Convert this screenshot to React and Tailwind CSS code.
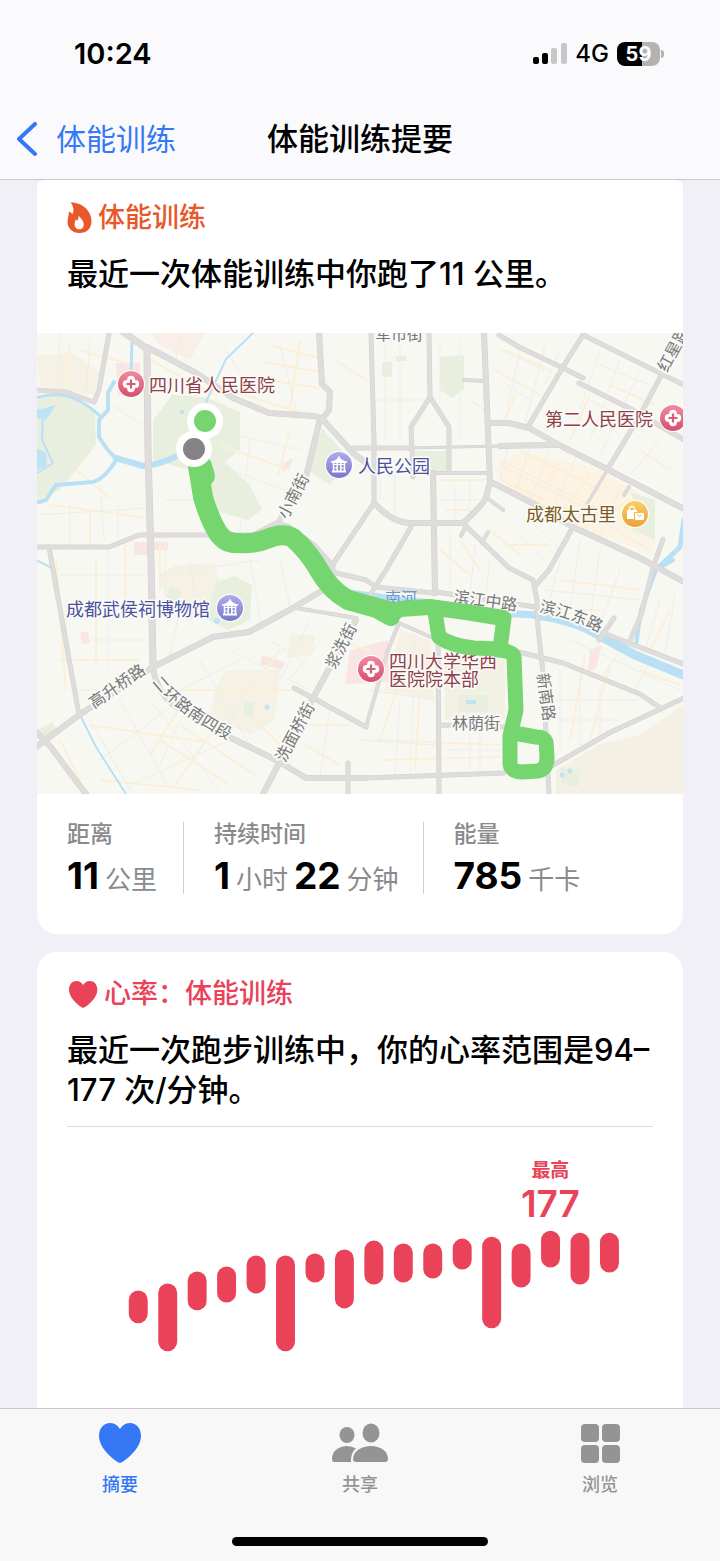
const FONT = "font-['Inter','Noto_Sans_CJK_SC',sans-serif]";

const ROADS = [
  [7, "M122 331 L147 349 L148 450 L151 560 L153 667"],
  [6, "M147 347 L196 373 L233 398 L269 413 L314 416 Q321 417 326 423 L353 453 L366 463"],
  [6, "M319 333 L322 384 L330 392 L329 410 L319 423 L306 477 L280 520"],
  [5, "M36 390 L66 392 L94 402 L99 390 L109 333"],
  [5, "M36 547 L109 547 L139 535 L253 535 L276 523 L289 527 L314 545 L333 566"],
  [5, "M333 564 L374 503 L374 443 L371 333"],
  [6, "M374 503 Q392 522 409 523 L463 523 Q484 504 486 497 L490 482 L484 333"],
  [6, "M491 482 L536 505 L573 527 L640 558 L686 583"],
  [5, "M352 448 L409 448"],
  [3, "M409 448 L500 446"],
  [6, "M500 446 L556 445"],
  [6, "M491 423 L509 423 L529 428 L563 447 L603 467 L686 510"],
  [5, "M499 335 L519 347 L563 368 L583 378"],
  [5, "M579 383 L629 408 L686 441"],
  [5, "M586 330 L563 367 L529 425"],
  [5, "M583 335 L686 386"],
  [5, "M663 372 L639 417 L609 467"],
  [3, "M609 467 L587 504"],
  [5, "M429 333 L430 397 L411 427 L413 477"],
  [5, "M430 397 L449 427 L449 472"],
  [4, "M433 473 L489 473"],
  [6, "M433 473 L435 593"],
  [5, "M411 527 L386 570 L368 598"],
  [5, "M463 523 L509 568 L533 580 L537 600 L538 627 L543 673 L549 794"],
  [5, "M573 527 L549 570 L536 585"],
  [4, "M486 497 L503 510"],
  [4, "M464 380 L484 381"],
  [4, "M466 526 L461 536"],
  [4, "M488 532 L482 543"],
  [4, "M629 487 L624 495"],
  [5, "M663 539 L653 568 L641 615 L629 643"],
  [5, "M436 592 L456 595 L536 607"],
  [5, "M599 640 L614 618"],
  [5, "M603 633 L629 643 L686 665"],
  [5, "M519 652 L563 663 L640 694 L659 707"],
  [5, "M550 767 L609 733 L686 697"],
  [5, "M366 778 L503 773"],
  [5, "M438 640 L439 794"],
  [5, "M441 725 L506 727"],
  [4, "M399 623 L433 638"],
  [4, "M399 623 L388 650 L366 727"],
  [5, "M294 688 L313 698 L366 727"],
  [6, "M153 667 L213 637 L249 632 L293 608 L323 590"],
  [4, "M296 608 L356 618"],
  [6, "M356 620 L313 698 L263 794"],
  [6, "M153 667 L79 715 L36 747"],
  [5, "M49 547 L79 715"],
  [6, "M36 732 L50 746 L86 794"],
  [6, "M153 668 Q158 697 180 709 L229 737 L276 760 L306 778 L366 778"],
  [5, "M348 763 L348 794"],
  [5, "M326 563 L336 573 L366 580 L376 587 L433 593"],
];

const LANES = [
  "M60 333 L58 390 M90 340 L86 396 M180 333 L176 362 M220 340 L260 405 M280 345 L296 410",
  "M112 405 L148 428 M70 500 L70 545 M100 478 L104 540 M36 515 L148 508 M118 505 L118 540",
  "M165 500 L200 500 M165 535 L165 600 M230 470 L290 492 M250 440 L240 530 M215 430 L300 450",
  "M60 575 L148 575 M66 600 L66 660 M108 550 L108 668 M84 640 L148 640 M70 690 L110 690",
  "M160 575 L260 560 M180 610 L170 655 M250 560 L262 630 M280 560 L290 606 M190 560 L195 600",
  "M90 720 L130 790 M120 700 L170 790 M150 700 L220 792 M100 760 L180 700 M130 785 L230 740",
  "M200 660 L250 745 M230 650 L310 690 M250 680 L225 730 M180 690 L240 660 M180 720 L160 765",
  "M385 340 L385 440 M400 345 L400 440 M440 340 L440 400 M460 340 L460 440 M375 400 L428 400",
  "M500 350 L545 370 M500 380 L530 400 M520 350 L505 420 M545 345 L525 425 M560 350 L545 385",
  "M600 350 L580 410 M620 360 L590 440 M640 370 L600 455 M650 385 L600 365 M590 400 L640 425",
  "M510 440 L500 480 M530 445 L515 495 M550 450 L530 500 M575 460 L550 515 M500 465 L590 510",
  "M600 480 L575 525 M620 490 L600 535 M570 500 L640 535 M590 515 L650 550 M660 440 L630 475",
  "M380 460 L380 500 M395 460 L395 515 M455 485 L455 520 M470 480 L470 515 M440 500 L485 500",
  "M450 530 L450 590 M475 545 L470 595 M490 560 L485 600 M515 530 L545 560 M530 520 L560 550",
  "M560 560 L550 600 M580 540 L570 610 M600 550 L590 620 M545 590 L640 600 M620 570 L600 625",
  "M450 660 L450 720 M470 660 L470 770 M445 690 L500 690 M445 750 L500 750 M480 730 L480 770",
  "M560 670 L560 750 M580 675 L580 745 M600 685 L600 735 M555 700 L640 700 M555 720 L620 720",
  "M375 660 L430 670 M370 690 L435 700 M360 740 L435 745 M400 700 L395 775 M415 640 L410 775",
  "M300 705 L290 765 M330 710 L320 775 M320 640 L290 680 M270 640 L300 660 M310 620 L280 680",
  "M660 600 L645 650 M675 595 L665 655 M570 640 L680 690 M620 650 L600 680 M650 660 L635 690",
];

const WARM_LANES = [
  "M78 350 L130 364 M150 360 L215 395 M210 385 L300 412 M270 345 L318 358 M262 362 L322 372 M255 378 L320 388 M300 340 L290 410 M335 360 L366 380",
  "M70 345 L64 385 M76 470 L110 498 M50 505 L148 518 M90 510 L90 545 M160 540 L160 590 M220 445 L290 470 M290 430 L278 475",
  "M56 560 L66 690 M60 615 L148 612 M96 560 L96 665 M125 545 L125 600 M60 660 L140 660 M90 725 L205 742",
  "M185 700 L150 755 M210 735 L175 785 M160 740 L230 785 M180 725 L255 775 M165 690 L290 690 M280 650 L250 690 M255 720 L280 745",
  "M470 400 L485 410 M495 370 L540 395 M505 350 L550 370 M515 395 L505 420 M600 345 L670 378 M610 385 L655 405 M590 395 L570 440",
  "M500 460 L600 510 M520 450 L600 490 M540 500 L560 460 M560 515 L590 475 M500 480 L545 500 M580 530 L630 500 M600 540 L640 555 M640 450 L670 470",
  "M440 480 L486 480 M445 510 L470 510 M460 540 L480 570 M440 550 L470 575 M505 545 L550 545 M490 530 L520 555 M560 580 L640 590 M555 610 L600 610",
  "M375 740 L500 745 M380 760 L500 757 M400 680 L380 740 M420 690 L415 770 M585 655 L570 740 M610 665 L590 740 M640 670 L680 685 M670 610 L650 650",
  "M300 725 L350 725 M305 745 L340 765 M330 640 L370 650 M520 670 L520 700 M100 780 L200 790 M60 740 L80 780",
];

const ROAD_LABELS = [
  ["小南街", "M287 520 L312 473"],
  ["滨江中路", "M453 602 L520 611"],
  ["滨江东路", "M539 612 Q571 617 606 636"],
  ["红星路", "M667 373 L695 321"],
  ["浆洗街", "M335 670 L361 620"],
  ["洗面桥街", "M285 763 L320 697"],
  ["高升桥路", "M94 709 L155 667"],
  ["二环路南四段", "M152 682 Q176 714 236 744"],
  ["新南路", "M537 674 L545 732"],
];

function HospitalPin({ x, y }) {
  return (
    <g transform={`translate(${x} ${y})`}>
      <circle r="14" fill="#fff" />
      <circle r="13" fill="url(#pinRed)" />
      <g fill="#fff">
        <circle cy="-4.3" r="3.9" />
        <circle cy="4.3" r="3.9" />
        <circle cx="-4.3" r="3.9" />
        <circle cx="4.3" r="3.9" />
        <rect x="-4" y="-4" width="8" height="8" />
      </g>
      <path d="M0 -4.5 V4.5 M-4.5 0 H4.5" stroke="#dd5a76" strokeWidth="2.2" />
    </g>
  );
}

function PavilionPin({ x, y }) {
  return (
    <g transform={`translate(${x} ${y})`}>
      <circle r="14" fill="#fff" />
      <circle r="13" fill="url(#pinPurple)" />
      <path d="M0 -9.5 L1 -7.5 Q3 -4.5 8.500 -3.500 Q8 -2 6 -2 H-6 Q-8 -2 -8.500 -3.500 Q-3 -4.5 -1 -7.5Z" fill="#fff" />
      <path d="M-5.500 -2 V6 M5.500 -2 V6 M-1.800 -2 V6 M1.800 -2 V6" stroke="#fff" strokeWidth="1.500" />
      <path d="M-5.500 3 H-1.800 M1.800 3 H5.500 M-5.500 -0.500 H5.500" stroke="#fff" strokeWidth="1" />
      <path d="M-7 6.500 H7" stroke="#fff" strokeWidth="2" />
    </g>
  );
}

function RouteMap() {
  return (
    <svg
      viewBox="37 333 646 461"
      className={`block w-full ${FONT}`}
      role="img"
      aria-label="跑步路线"
    >
      <defs>
        <linearGradient id="pinRed" x1="0" y1="0" x2="0" y2="1">
          <stop offset="0" stopColor="#f28b9f" />
          <stop offset="1" stopColor="#d64e6d" />
        </linearGradient>
        <linearGradient id="pinPurple" x1="0" y1="0" x2="0" y2="1">
          <stop offset="0" stopColor="#b0abeb" />
          <stop offset="1" stopColor="#7a78c9" />
        </linearGradient>
        <linearGradient id="pinGold" x1="0" y1="0" x2="0" y2="1">
          <stop offset="0" stopColor="#f8cf62" />
          <stop offset="1" stopColor="#eba23a" />
        </linearGradient>
        {ROAD_LABELS.map(([label, d], i) => (
          <path key={label} id={`road-${i}`} d={d} />
        ))}
      </defs>
      <rect x="36" y="332" width="648" height="463" fill="#f8f8f3" />

      <g fill="#f6f1e5">
        <path d="M37 356 L70 352 L100 372 L94 395 L40 386Z" />
        <path d="M158 575 L175 565 L215 563 L222 590 L190 622 L172 610Z" />
        <path d="M215 690 L225 670 L280 670 L275 720 L250 735 L210 715Z" />
        <path d="M494 470 L520 450 L600 470 L650 500 L655 555 L600 535 L520 500Z" fill="#fcf3e2" />
        <path d="M556 770 L600 744 L640 735 L683 705 V794 H556Z" fill="#f4f0e3" />
        <path d="M445 655 L505 660 L505 720 L445 720Z" fill="#f3f1e3" />
        <path d="M400 630 L430 640 L434 700 L385 690Z" />
        <path d="M290 635 L315 635 L312 655 L287 658Z" />
      </g>
      <g fill="#e9efdf">
        <path d="M37 400 Q70 388 95 410 L96 445 L60 490 L37 500Z" />
        <path d="M153 420 L172 395 L205 397 L240 412 L240 450 L225 462 L250 485 L262 510 L248 520 L205 508 L190 470 L153 460Z" />
        <path d="M322 428 L350 460 L330 485 L308 470Z" />
        <path d="M415 451 L447 451 L447 471 L415 471Z" />
        <path d="M440 357 L464 355 L464 388 L452 398 L440 390Z" />
        <path d="M216 582 L235 576 L252 585 L250 620 L228 630 L204 618Z" />
        <path d="M630 492 L655 500 L655 540 L632 530 L640 512Z" />
        <path d="M458 695 L488 695 L488 712 L458 712Z" />
        <path d="M560 768 L580 770 L578 787 L562 784Z" />
        <path d="M37 730 L52 722 L58 731 L44 741Z" />
        <path d="M382 362 L392 362 L392 377 L382 377Z M396 356 L406 356 L406 361 L396 361Z" />
        <path d="M170 585 L182 592 L176 602 L166 598Z M244 702 L254 702 L254 716 L244 716Z" />
      </g>
      <g fill="#f9e6e4">
        <path d="M116 363 L140 363 L140 395 L118 395Z" />
        <path d="M80 633 L88 631 L90 643 L82 644Z M262 655 L285 662 L282 670 L260 664Z" />
        <path d="M350 650 L388 640 L390 682 L345 684Z M590 650 L602 645 L596 668 L588 672Z" />
        <path d="M134 542 H168 V550 H148 V555 H134Z M283 463 L293 458 L290 468 L282 472Z" />
        <path d="M150 333 L205 333 L190 360 L160 345Z" fill="#f9eee8" />
      </g>

      <g fill="none" stroke="#fcefd8" strokeWidth="2">
        {WARM_LANES.map((d) => (
          <path key={d} d={d} />
        ))}
      </g>
      <g fill="none" stroke="#eeede9" strokeWidth="1">
        {LANES.map((d) => (
          <path key={d} d={d} />
        ))}
      </g>

      <g fill="none" stroke="#b9e0f4" strokeLinejoin="round" strokeLinecap="round">
        <path d="M132 343 L131 372" strokeWidth="3" />
        <path d="M114 382 L108 393 L108 410 L99 420 L99 437 Q108 452 116 458" strokeWidth="4" />
        <path d="M116 458 L143 466 Q160 465 179 455" strokeWidth="6" />
        <path d="M36 398 Q70 386 101 417" strokeWidth="3" />
        <path d="M116 460 Q104 480 92 482 L56 485 L46 500 L36 503" strokeWidth="4" />
        <path d="M43 412 L42 440 L53 463 L36 474" strokeWidth="2" />
        <path d="M253 333 L226 359 L206 402" strokeWidth="2" />
        <path d="M350 593 L400 600 L433 603 L500 613 L536 615" strokeWidth="7" />
        <path d="M536 615 Q575 620 600 636 L635 655 L686 676" strokeWidth="9" />
        <path d="M673 560 L656 570 L641 610 L636 645" strokeWidth="4" />
        <path d="M684 520 L680 547 L659 567" strokeWidth="5" />
        <path d="M81 717 L96 747 L126 794 M36 560 L50 567" strokeWidth="2" />
      </g>
      <g fill="#bfe3f5">
        <path d="M37 410 L56 405 L46 420 L37 418Z M37 449 L46 452 L47 466 L37 470Z" />
        <path d="M187 415 h4 v10 h-4Z M180 410 h4 v4 h-4Z M466 700 h10 v4 h-10Z" />
        <circle cx="562" cy="775" r="2.5" />
        <circle cx="570" cy="771" r="2.5" />
        <circle cx="267" cy="707" r="2.5" />
        <circle cx="217" cy="621" r="3" />
      </g>

      <g fill="none" strokeLinejoin="round" strokeLinecap="round">
        {ROADS.map(([w, d]) => (
          <path key={d} d={d} stroke="#d3d1ce" strokeWidth={w} />
        ))}
        {ROADS.map(([w, d]) => (
          <path key={d} d={d} stroke="#dedddb" strokeWidth={w - 1} />
        ))}
      </g>

      <g
        fill="#77777a"
        fontSize="16"
        stroke="#f9f9f5"
        strokeWidth="4"
        strokeLinejoin="round"
        paintOrder="stroke"
      >
        {ROAD_LABELS.map(([label], i) => (
          <text key={label}>
            <textPath href={`#road-${i}`}>{label}</textPath>
          </text>
        ))}
        <text x="375" y="340">军市街</text>
        <text x="452" y="729">林荫街</text>
        <text x="385" y="604" fill="#6f95cc" stroke="none">南河</text>
      </g>

      <g
        fontSize="18"
        stroke="#fbfbf8"
        strokeWidth="3"
        strokeLinejoin="round"
        paintOrder="stroke"
      >
        <g fill="#8f3f4c">
          <text x="149" y="392">四川省人民医院</text>
          <text x="545" y="426">第二人民医院</text>
          <text x="389" y="668">四川大学华西</text>
          <text x="389" y="686">医院院本部</text>
        </g>
        <g fill="#4b509f">
          <text x="358" y="473">人民公园</text>
          <text x="66" y="616">成都武侯祠博物馆</text>
        </g>
        <text x="526" y="521" fill="#7c5b24">成都太古里</text>
      </g>

      <HospitalPin x={131} y={384} />
      <HospitalPin x={673} y={418} />
      <HospitalPin x={371} y={669} />
      <PavilionPin x={339} y={465} />
      <PavilionPin x={230} y={608} />
      <g transform="translate(635 514)">
        <circle r="14" fill="#fff" />
        <circle r="13" fill="url(#pinGold)" />
        <path d="M-5.500 -3 V-5 Q-5.500 -7.500 -3 -7.500 Q-0.500 -7.500 -0.500 -5 V-3" fill="none" stroke="#fff" strokeWidth="1.300" />
        <path d="M-8 -4 H2 V-2 H0 Q-1 -2 -1 -1 V5 H-8Z" fill="#fff" />
        <rect x="0" y="-1" width="9" height="7" rx="1" fill="#fff" />
        <path d="M2.500 0.500 Q4.500 4 6.500 0.500" fill="none" stroke="#efad42" strokeWidth="1" />
      </g>

      <g fill="none" stroke="#75d670" strokeLinejoin="round" strokeLinecap="round">
        <path d="M202 466 L205 476" strokeWidth="20" />
        <path d="M197 460 L203 497 Q209 518 218 533 Q226 544 238 543 Q255 544 267 539 Q283 532 293 538 Q308 551 319 570 Q330 590 348 600 L388 611" strokeWidth="20" />
        <path d="M366 604 L392 614 L400 609 L429 607 L466 612 L503 618" strokeWidth="16" />
        <path d="M380 611 L391 617" strokeWidth="18" />
        <path d="M435 612 L439 637 Q452 646 474 648 L500 649 L504 618" strokeWidth="15" />
        <path d="M498 650 Q514 651 514 658 L516 710 L510 736 L510 764 Q511 771 521 772 L538 771 Q547 769 547 757 L546 742 Q544 737 536 737 L514 733" strokeWidth="15" />
      </g>
      <circle cx="205" cy="421" r="18" fill="#fff" />
      <circle cx="194" cy="449" r="18" fill="#fff" />
      <circle cx="205" cy="421" r="11" fill="#75d670" />
      <circle cx="194" cy="449" r="11" fill="#858388" />
    </svg>
  );
}

const RATES = [
  [164, 197], [157, 225], [145, 184], [140, 176], [129, 167], [129, 225],
  [127, 156], [123, 182], [114, 158], [117, 156], [117, 152], [112, 143],
  [110, 202], [117, 161], [104, 141], [106, 158], [106, 146],
];

function RateChart() {
  return (
    <svg viewBox="0 0 588 280" className={`block w-full ${FONT}`} role="img" aria-label="心率范围">
      <g fill="#e94259" textAnchor="middle">
        <text x="485" y="50" fontSize="19" fontWeight="700">最高</text>
        <text x="485" y="90" fontSize="37" fontWeight="600">177</text>
        {RATES.map(([top, bottom], i) => (
          <rect key={i} x={62 + i * 29.55} y={top} width="19" height={bottom - top} rx="9.5" />
        ))}
      </g>
    </svg>
  );
}

function Metric({ label, parts }) {
  return (
    <div className="flex flex-col">
      <dt className="text-[23px] leading-6 font-medium text-[#8a8a8e]">{label}</dt>
      <dd className="mt-3 flex h-9 items-baseline gap-[6px] text-[37px] leading-9 font-bold text-black">
        {parts.map(([value, unit]) => (
          <span key={unit} className="flex items-baseline gap-[6px]">
            {value}
            <span className="text-[26px] font-normal text-[#8a8a8e]">{unit}</span>
          </span>
        ))}
      </dd>
    </div>
  );
}

const HEART = "M21 40 C19 40 0 27 0 13 C0 5 5 0 11 0 C16 0 19 3 21 6 C23 3 26 0 31 0 C37 0 42 5 42 13 C42 27 23 40 21 40Z";

function Tab({ label, active, children }) {
  return (
    <a
      href="#"
      aria-current={active ? "page" : undefined}
      className={`flex flex-1 flex-col items-center ${active ? "text-[#3478f6]" : "text-[#949494]"}`}
    >
      <span className="flex h-10 items-center">{children}</span>
      <span className="mt-2 text-[18px] leading-7 font-medium">{label}</span>
    </a>
  );
}

export default function App() {
  return (
    <div className={`flex min-h-screen flex-col bg-[#f1f0f6] text-black ${FONT}`}>
      <header className="border-b border-[#c9c9cd] bg-[#fafafc]">
        <div className="flex h-[100px] items-center justify-between pt-2 pr-14 pl-[74px]">
          <time className="text-[29px] font-semibold">10:24</time>
          <div className="flex items-center gap-2">
            <svg width="34" height="22" viewBox="0 0 34 22" aria-hidden="true">
              <rect x="0" y="14" width="6" height="7" rx="2" />
              <rect x="9" y="10" width="6" height="11" rx="2" />
              <rect x="18" y="5" width="6" height="16" rx="2" fill="#c8c8ca" />
              <rect x="28" y="0" width="6" height="21" rx="2" fill="#c8c8ca" />
            </svg>
            <span className="text-[24px] font-medium">4G</span>
            <div className="flex items-center gap-px">
              <span className="flex h-6 w-[43px] items-center justify-center rounded-lg bg-linear-to-r from-black from-59% to-[#b3b3b3] to-59% text-[20px] font-bold text-white">
                59
              </span>
              <span className="h-2 w-[3px] rounded-r-full bg-[#b3b3b3]" />
            </div>
          </div>
        </div>
        <div className="grid h-[79px] grid-cols-[1fr_auto_1fr] items-center px-4">
          <button type="button" className="flex items-center gap-[18px] text-[30px] text-[#3478f6]">
            <svg width="22" height="36" viewBox="0 0 22 36" fill="none" aria-hidden="true">
              <path d="M19 2 L3 17 L19 32" stroke="currentColor" strokeWidth="4" strokeLinecap="round" strokeLinejoin="round" />
            </svg>
            体能训练
          </button>
          <h1 className="text-[31px] font-medium">体能训练提要</h1>
        </div>
      </header>

      <main className="flex flex-1 flex-col gap-[18px] px-[37px]">
        <section className="overflow-hidden rounded-t-lg rounded-b-[20px] bg-white">
          <div className="px-[30px] pt-[22px]">
            <h2 className="flex items-center gap-[6px] text-[27px] leading-8 font-medium text-[#e8582a]">
              <svg width="25" height="32" viewBox="0 0 25 32" aria-hidden="true">
                <path
                  fill="currentColor"
                  fillRule="evenodd"
                  d="M3.500 0.500 C15 0 24.500 9 24.500 19 C24.500 26.500 20 31 12.500 31 C5 31 0.500 26 0.500 20 C0.500 16 2 13.500 2 9.500 C3.800 10 4.800 11 5.200 12.500 C7.500 8.500 6.500 4 3.500 0.500Z M12.500 27.200 C15.200 27.200 16.700 25.500 16.700 22.500 C16.700 18.500 14 17 11.500 13.500 C11.800 16 11 17.500 10 19 C9.600 18.500 9.200 18 9 17 C8 18.500 7.600 20.500 7.600 22.500 C7.600 25.500 9.500 27.200 12.500 27.200Z"
                />
              </svg>
              体能训练
            </h2>
            <p className="mt-5 text-[31px] leading-10 font-medium">
              最近一次体能训练中你跑了11 公里。
            </p>
          </div>
          <div className="mt-[39px]">
            <RouteMap />
          </div>
          <dl className="flex px-[30px] pt-7 pb-10">
            <div className="border-r border-[#d1d1d6] pr-[26px]">
              <Metric label="距离" parts={[["11", "公里"]]} />
            </div>
            <div className="border-r border-[#d1d1d6] pr-6 pl-[30px]">
              <Metric label="持续时间" parts={[["1", "小时"], ["22", "分钟"]]} />
            </div>
            <div className="pl-[30px]">
              <Metric label="能量" parts={[["785", "千卡"]]} />
            </div>
          </dl>
        </section>

        <section className="flex-1 rounded-t-[20px] bg-white px-[30px] pt-[26px]">
          <h2 className="flex items-center gap-[6px] text-[27px] leading-8 font-medium text-[#e94259]">
            <svg width="31" height="27" viewBox="-2 0 44 40" aria-hidden="true">
              <path d={HEART} fill="currentColor" />
            </svg>
            心率：体能训练
          </h2>
          <p className="mt-5 text-[31px] leading-10 font-medium">
            最近一次跑步训练中，你的心率范围是94–<br />177 次/分钟。
          </p>
          <div className="mt-4 border-t border-[#dcdcde]">
            <RateChart />
          </div>
        </section>
      </main>

      <footer className="border-t border-[#c9c9cd] bg-[#f8f8f8] pb-[15px]">
        <nav className="flex h-[128px] pt-[14px]">
          <Tab label="摘要" active>
            <svg width="42" height="40" viewBox="0 0 42 40" aria-hidden="true">
              <path d={HEART} fill="currentColor" />
            </svg>
          </Tab>
          <Tab label="共享">
            <svg width="58" height="40" viewBox="0 0 58 40" fill="currentColor" aria-hidden="true">
              <ellipse cx="16" cy="12" rx="7.5" ry="8" />
              <ellipse cx="40" cy="10" rx="8.5" ry="9.5" />
              <path d="M3 39 Q1 39 1 36 C1 28 8 23 16 23 Q21 23 25 25.500 C21 29 20 33 20 39Z" />
              <path d="M25 39 Q22 39 22 36 C22 28 31 23 40 23 C49 23 57 28 57 36 Q57 39 54 39Z" />
            </svg>
          </Tab>
          <Tab label="浏览">
            <svg width="40" height="40" viewBox="0 0 40 40" fill="currentColor" aria-hidden="true">
              <rect x="1" y="1" width="18" height="18" rx="4" />
              <rect x="22" y="1" width="18" height="18" rx="4" />
              <rect x="1" y="22" width="18" height="18" rx="4" />
              <rect x="22" y="22" width="18" height="18" rx="4" />
            </svg>
          </Tab>
        </nav>
        <div className="mx-auto h-[9px] w-64 rounded-full bg-black" />
      </footer>
    </div>
  );
}
